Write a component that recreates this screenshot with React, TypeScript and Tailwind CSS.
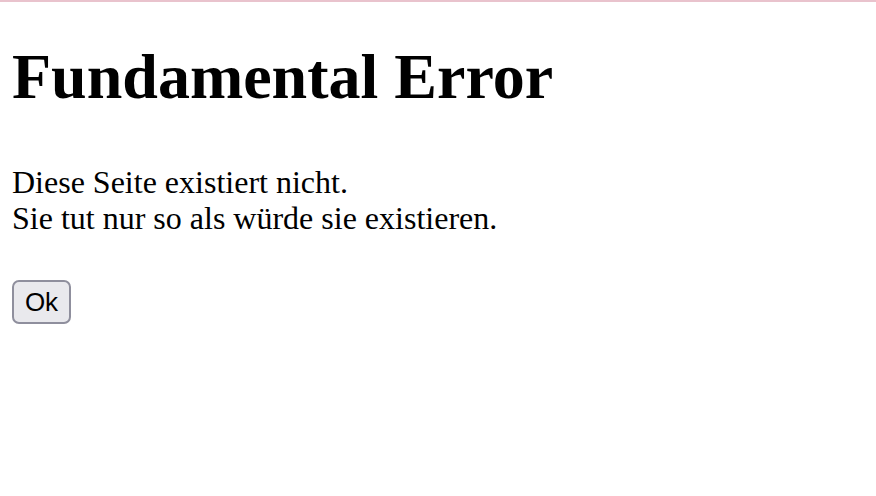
export default function App() {
  return (
    <div className="min-h-screen bg-white text-black">
      <div className="h-[2px] bg-[#e9c3cd]" />
      <div className="px-[12px] font-['Liberation_Serif',serif]">
        <h1 className="pt-[38px] text-[64px] font-bold leading-[1.15]">Fundamental Error</h1>
        <p className="mt-[50px] text-[32px] leading-[36px]">
          Diese Seite existiert nicht.
          <br />
          Sie tut nur so als würde sie existieren.
        </p>
        <button className="mt-[44px] flex h-[44px] w-[59px] items-center justify-center rounded-[7px] border-2 border-[#8f8f9d] bg-[#e9e9ed] font-['Liberation_Sans',sans-serif] text-[26px] leading-none">
          Ok
        </button>
      </div>
    </div>
  );
}
